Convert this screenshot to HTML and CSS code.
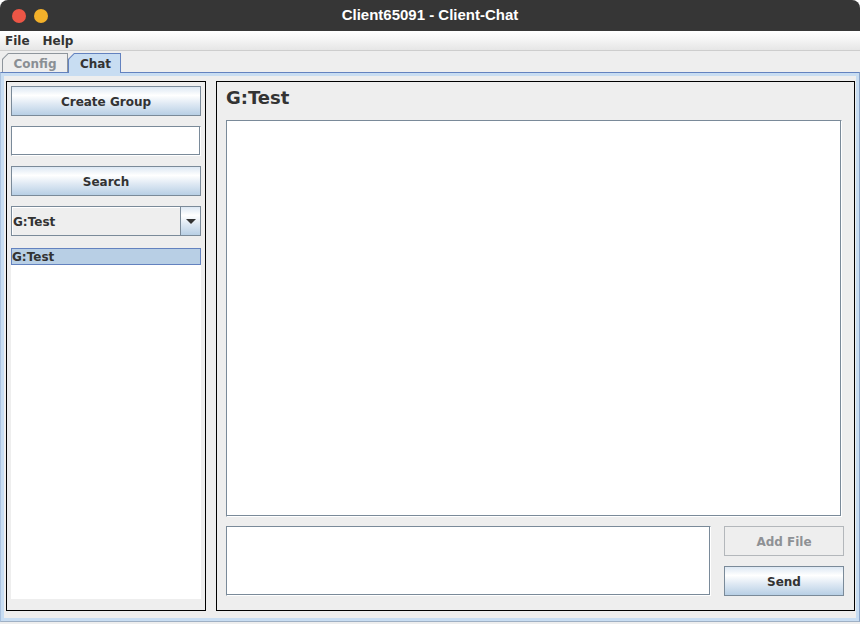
FILE: index.html
```html
<!DOCTYPE html>
<html>
<head>
<meta charset="utf-8">
<title>Client65091 - Client-Chat</title>
<link rel="stylesheet" href="styles.css">
</head>
<body>
<div class="window">
  <div class="titlebar">
    <div class="lights">
      <span class="dot red"></span>
      <span class="dot amber"></span>
    </div>
    <div class="title">Client65091 - Client-Chat</div>
  </div>
  <div class="menubar">
    <span class="menu">File</span>
    <span class="menu">Help</span>
  </div>
  <div class="tabs">
    <div class="tab config"><div class="tab-in">Config</div></div>
    <div class="tab chat"><div class="tab-in">Chat</div></div>
  </div>
  <div class="tabcontent">
    <div class="panels">
      <div class="left">
        <button class="btn">Create Group</button>
        <div class="field search-field"></div>
        <button class="btn">Search</button>
        <div class="combo">
          <div class="combo-text">G:Test</div>
          <div class="combo-arrow"><span class="tri"></span></div>
        </div>
        <div class="list">
          <div class="list-item">G:Test</div>
        </div>
      </div>
      <div class="right">
        <div class="room-title">G:Test</div>
        <div class="field chatlog"></div>
        <div class="compose">
          <div class="field message"></div>
          <div class="actions">
            <button class="btn disabled" disabled>Add File</button>
            <button class="btn">Send</button>
          </div>
        </div>
      </div>
    </div>
  </div>
</div>
</body>
</html>
```

FILE: styles.css
```css
* {
  box-sizing: border-box;
}

html {
  background: #ffffff;
}

body {
  margin: 0;
  font-family: "DejaVu Sans", "Liberation Sans", sans-serif;
  font-weight: bold;
  font-size: 12px;
  color: #333333;
}

.window {
  width: 860px;
  height: 624px;
  background: #eeeeee;
  border-radius: 8px 8px 0 0;
  overflow: hidden;
}

/* ---------- title bar ---------- */
.titlebar {
  height: 31px;
  background: #363636;
  display: flex;
  align-items: center;
  position: relative;
}

.lights {
  display: flex;
  gap: 8px;
  padding-left: 12px;
}

.dot {
  width: 14px;
  height: 14px;
  border-radius: 50%;
  display: block;
}

.dot.red {
  background: #ec5646;
}

.dot.amber {
  background: #f3b12a;
}

.title {
  position: absolute;
  left: 0;
  right: 0;
  top: 0;
  line-height: 30px;
  text-align: center;
  color: #ffffff;
  font-family: "Liberation Sans", Arial, sans-serif;
  font-size: 15px;
  font-weight: bold;
  pointer-events: none;
}

/* ---------- menu bar ---------- */
.menubar {
  height: 20px;
  background: linear-gradient(to bottom, #ffffff 0%, #f6f6f6 40%, #e6e6e6 100%);
  border-bottom: 1px solid #cdcdcd;
  display: flex;
  align-items: center;
  padding-left: 5px;
  padding-top: 2px;
  gap: 13px;
  line-height: 17px;
}

/* ---------- tabs ---------- */
.tabs {
  height: 21px;
  display: flex;
  align-items: flex-end;
  padding-left: 2px;
  position: relative;
  z-index: 2;
}

.tab {
  height: 19px;
  padding: 1px 1px 0 1px;
  clip-path: polygon(6px 0, 100% 0, 100% 100%, 0 100%, 0 6px);
}

.tab-in {
  height: 100%;
  text-align: center;
  line-height: 18px;
  padding-top: 1px;
  clip-path: polygon(5.4px 0, 100% 0, 100% 100%, 0 100%, 0 5.4px);
}

.tab.config {
  width: 66px;
  background: #8e959c;
}

.tab.config .tab-in {
  background: #eeeeee;
  color: #8a8f94;
}

.tab.chat {
  width: 53px;
  height: 20px;
  margin-bottom: -1px;
  background: #6382bf;
}

.tab.chat .tab-in {
  background: #c8ddf2;
  color: #333333;
  padding-left: 2px;
}

/* ---------- tab content ---------- */
.tabcontent {
  height: 550px;
  border-top: 1px solid #6382bf;
  border-left: 1px solid #a9c1de;
  border-right: 1px solid #8aa4c8;
  border-bottom: 1px solid #9fb0c4;
  background: #c8ddf2;
  padding: 3px;
}

.panels {
  height: 100%;
  background: #eeeeee;
  display: flex;
  gap: 10px;
  padding: 5px 1px 7px 2px;
}

.left {
  width: 200px;
  border: 1px solid #000000;
  padding: 4px 4px 11px 4px;
  display: flex;
  flex-direction: column;
  gap: 10px;
}

.right {
  flex: 1;
  border: 1px solid #000000;
  padding: 0 0 14px 9px;
  display: flex;
  flex-direction: column;
}

/* ---------- controls ---------- */
.btn {
  display: block;
  width: 190px;
  height: 30px;
  border: 1px solid #7a8a99;
  background: linear-gradient(to bottom, #dde8f3 0%, #ffffff 30%, #dde8f3 62%, #b8cfe5 100%);
  font-family: "DejaVu Sans", sans-serif;
  font-weight: bold;
  font-size: 12px;
  color: #333333;
  padding: 2px 0 0 0;
  margin: 0;
  text-align: center;
}

.btn.disabled {
  background: #eeeeee;
  border-color: #b3b7bb;
  color: #8e9195;
}

.field {
  background: #ffffff;
  border: 1px solid #7a8a99;
  border-right-color: #ffffff;
  border-bottom-color: #ffffff;
  box-shadow: inset -1px -1px 0 #7a8a99;
}

.search-field {
  width: 190px;
  height: 30px;
}

.combo {
  width: 190px;
  height: 30px;
  border: 1px solid #7a8a99;
  display: flex;
}

.combo-text {
  flex: 1;
  background: #eeeeee;
  border-top: 1px solid #ffffff;
  border-left: 1px solid #ffffff;
  padding-left: 0;
  padding-top: 1px;
  line-height: 26px;
}

.combo-arrow {
  width: 20px;
  border-left: 1px solid #7a8a99;
  background: linear-gradient(to bottom, #dde8f3 0%, #ffffff 30%, #dde8f3 62%, #b8cfe5 100%);
  display: flex;
  align-items: center;
  justify-content: center;
  padding-top: 1px;
}

.tri {
  width: 0;
  height: 0;
  border-left: 5px solid transparent;
  border-right: 5px solid transparent;
  border-top: 5px solid #333333;
}

.list {
  flex: 1;
  background: #ffffff;
  margin-top: 2px;
}

.list-item {
  height: 17px;
  background: #b8cfe5;
  border: 1px solid #6382bf;
  line-height: 15px;
  padding-top: 1px;
}

.room-title {
  font-size: 18px;
  line-height: 22px;
  padding-top: 5px;
  height: 38px;
  color: #333333;
}

.chatlog {
  width: 616px;
  height: 397px;
}

.compose {
  margin-top: 9px;
  display: flex;
  gap: 13px;
}

.message {
  width: 485px;
  height: 70px;
}

.actions {
  display: flex;
  flex-direction: column;
  gap: 10px;
}

.actions .btn {
  width: 120px;
}
```
